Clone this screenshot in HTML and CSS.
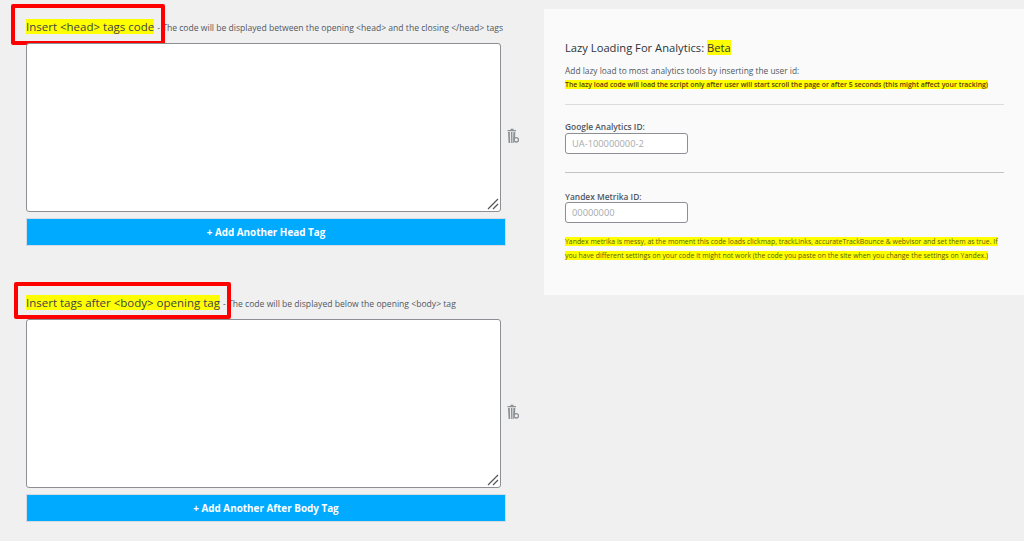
FILE: index.html
```html
<!DOCTYPE html>
<html lang="en">
<head>
<meta charset="utf-8">
<title>Insert tags</title>
<link rel="stylesheet" href="styles.css">
</head>
<body>
<main class="page">
  <div class="left">
    <section class="block block-head">
      <div class="heading">
        <span class="title"><mark>Insert &lt;head&gt; tags code</mark></span>
        <span class="desc">- The code will be displayed between the opening &lt;head&gt; and the closing &lt;/head&gt; tags</span>
        <span class="callout callout-head"></span>
      </div>
      <div class="editor">
        <div class="area">
          <svg class="grip" viewBox="0 0 12 12"><path d="M1 11 11 1M6 11l5-5" /></svg>
        </div>
        <svg class="trash" viewBox="0 0 12 16"><path class="tr" d="M3.500 2V.8h3V2H9v1.200H.5V2zM1 4h1.800l.4 11H1.600zM3.900 4h1.500l.1 11H4.200zM6.400 4h1.900l-.2 5.500-1.400 2 .1 3.500H6z"/><circle class="tc" cx="9.300" cy="11.800" r="2.200"/></svg>
      </div>
      <button class="add">+ Add Another Head Tag</button>
    </section>
    <section class="block block-body">
      <div class="heading">
        <span class="title"><mark>Insert tags after &lt;body&gt; opening tag</mark></span>
        <span class="desc">- The code will be displayed below the opening &lt;body&gt; tag</span>
        <span class="callout callout-body"></span>
      </div>
      <div class="editor">
        <div class="area">
          <svg class="grip" viewBox="0 0 12 12"><path d="M1 11 11 1M6 11l5-5" /></svg>
        </div>
        <svg class="trash" viewBox="0 0 12 16"><path class="tr" d="M3.500 2V.8h3V2H9v1.200H.5V2zM1 4h1.800l.4 11H1.600zM3.900 4h1.500l.1 11H4.200zM6.400 4h1.900l-.2 5.500-1.400 2 .1 3.500H6z"/><circle class="tc" cx="9.300" cy="11.800" r="2.200"/></svg>
      </div>
      <button class="add">+ Add Another After Body Tag</button>
    </section>
  </div>
  <aside class="panel">
    <h2 class="panel-title">Lazy Loading For Analytics: <mark>Beta</mark></h2>
    <p class="intro">Add lazy load to most analytics tools by inserting the user id:</p>
    <p class="warn"><mark>The lazy load code will load the script only after user will start scroll the page or after 5 seconds (this might affect your tracking)</mark></p>
    <hr class="rule">
    <label class="field field-ga">
      <span class="label">Google Analytics ID:</span>
      <input class="input" type="text" placeholder="UA-100000000-2">
    </label>
    <hr class="rule rule-2">
    <label class="field field-ym">
      <span class="label">Yandex Metrika ID:</span>
      <input class="input" type="text" placeholder="00000000">
    </label>
    <p class="note"><mark>Yandex metrika is messy, at the moment this code loads clickmap, trackLinks, accurateTrackBounce &amp; webvisor and set them as true. If you have different settings on your code it might not work (the code you paste on the site when you change the settings on Yandex.)</mark></p>
  </aside>
</main>
</body>
</html>
```
FILE: styles.css
```css
* { box-sizing: border-box; }
html, body { margin: 0; height: 100%; }
body {
  background: #f0f0f1;
  color: #3c434a;
  font-family: "Open Sans", "Noto Sans", sans-serif;
  overflow: hidden;
}
mark { background: #ffff00; color: inherit; }
.page { display: flex; align-items: flex-start; height: 541px; }
.left { width: 544px; padding: 0 0 0 26px; flex: none; }
.block-head { padding-top: 18px; }
.block-body { padding-top: 48px; }
.heading {
  position: relative;
  display: flex;
  align-items: baseline;
  gap: 3px;
  height: 25px;
  white-space: nowrap;
}
.title { font-size: 11.500px; line-height: 17px; color: #3c434a; }
.desc { font-size: 8.600px; line-height: 17px; color: #50575e; }
.callout { position: absolute; border: 4px solid #ff0000; border-radius: 2px; }
.callout-head { left: -15px; top: -14px; width: 154px; height: 41px; }
.callout-body { left: -12px; top: -12px; width: 217px; height: 37px; }
.editor { display: flex; align-items: center; gap: 6px; }
.area {
  position: relative;
  width: 475px;
  height: 169px;
  background: #fff;
  border: 1px solid #8c8f94;
  border-radius: 3px;
}
.grip { position: absolute; right: 1px; bottom: 1px; width: 12px; height: 12px; }
.grip path { fill: none; stroke: #555; stroke-width: 1.200; }
.trash { width: 12px; height: 16px; margin-top: 16px; }
.tr { fill: #8c8f94; }
.tc { fill: #f0f0f1; stroke: #8c8f94; stroke-width: 1.300; }
.add {
  display: block;
  width: 480px;
  height: 28px;
  margin-top: 6px;
  background: #00aaff;
  border: 1px solid #d5dbe0;
  border-radius: 0;
  color: #fff;
  font: 700 9.900px/26px "Open Sans", "Noto Sans", sans-serif;
  text-align: center;
  padding: 0;
}
.panel {
  width: 480px;
  height: 286px;
  margin-top: 9px;
  padding: 31px 20px 0 21px;
  background: #fafafa;
  flex: none;
}
.panel-title {
  margin: 0;
  font-size: 11.200px;
  line-height: 15px;
  font-weight: 400;
  color: #2c3338;
}
.intro { margin: 10px 0 0; font-size: 8.350px; line-height: 12px; color: #50575e; }
.warn { margin: 3px 0 0; font-size: 6.900px; line-height: 10px; color: #5c3a00; font-weight: 600; white-space: nowrap; }
.rule { margin: 14px 0 0; border: 0; border-top: 1px solid #dcdcde; width: 439px; }
.rule-2 { margin-top: 18px; border-top-color: #c3c4c7; }
.field { display: block; }
.field-ga { margin-top: 16px; }
.field-ga .label { line-height: 12px; }
.field-ym { margin-top: 18px; }
.label { display: block; font-size: 8.400px; line-height: 11px; font-weight: 600; color: #50575e; }
.input {
  display: block;
  width: 123px;
  height: 21px;
  padding: 0 6px;
  background: #fff;
  border: 1px solid #8c8f94;
  border-radius: 3px;
  font: 400 9.300px/19px "Open Sans", "Noto Sans", sans-serif;
  color: #2c3338;
}
.input::placeholder { color: #a7aaad; opacity: 1; }
.note { margin: 12px 0 0; font-size: 6.900px; line-height: 13.500px; color: #5a5a00; width: 436px; }
```
